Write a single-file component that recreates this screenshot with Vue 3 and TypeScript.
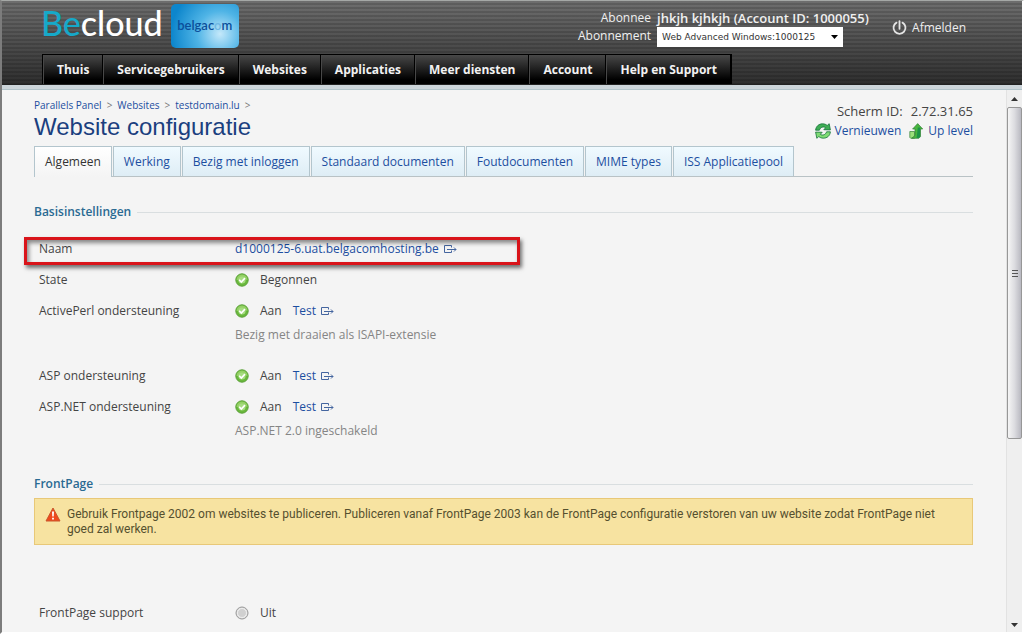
<script setup lang="ts">
import { ref } from 'vue'

interface Setting {
  label: string
  host?: string
  state?: string
  test?: boolean
  note?: string
  marked?: boolean
}

const menu: string[] = ['Thuis', 'Servicegebruikers', 'Websites', 'Applicaties', 'Meer diensten', 'Account', 'Help en Support']
const crumbs: string[] = ['Parallels Panel', 'Websites', 'testdomain.lu']
const tabs: string[] = ['Algemeen', 'Werking', 'Bezig met inloggen', 'Standaard documenten', 'Foutdocumenten', 'MIME types', 'ISS Applicatiepool']
const activeTab = ref('Algemeen')
const subscription = ref('Web Advanced Windows:1000125')

const basics: Setting[] = [
  { label: 'Naam', host: 'd1000125-6.uat.belgacomhosting.be', marked: true },
  { label: 'State', state: 'Begonnen' },
  { label: 'ActivePerl ondersteuning', state: 'Aan', test: true, note: 'Bezig met draaien als ISAPI-extensie' },
  { label: 'ASP ondersteuning', state: 'Aan', test: true },
  { label: 'ASP.NET ondersteuning', state: 'Aan', test: true, note: 'ASP.NET 2.0 ingeschakeld' },
]
</script>

<template>
  <div class="window">
    <header class="top">
      <div class="top-row">
        <div class="brand">
          <span class="becloud"><span class="be">Be</span>cloud</span>
          <span class="belgacom">belgac<span class="ring">o</span>m</span>
        </div>
        <div class="account">
          <span class="account-label">Abonnee</span>
          <strong class="account-name">jhkjh kjhkjh (Account ID: 1000055)</strong>
          <label class="account-label" for="subscription">Abonnement</label>
          <span class="select-box">
            <select id="subscription" v-model="subscription">
              <option>Web Advanced Windows:1000125</option>
            </select>
            <svg class="caret" width="7" height="4" viewBox="0 0 7 4"><path d="M0 0h7L3.500 4z" fill="#000" /></svg>
          </span>
        </div>
        <a class="logout" href="#">
          <svg width="15" height="16" viewBox="0 0 15 16" fill="none" stroke="#e4e4e4" stroke-width="1.800" stroke-linecap="round">
            <path d="M4.500 2.600A6 6 0 1 0 10.500 2.600M7.500 1.200V8.800" />
          </svg>
          Afmelden
        </a>
      </div>
      <nav class="menu">
        <a v-for="item in menu" :key="item" href="#">{{ item }}</a>
      </nav>
    </header>

    <div class="body">
      <main class="content">
        <div class="heading">
          <div>
            <nav class="crumbs">
              <template v-for="crumb in crumbs" :key="crumb"><a href="#">{{ crumb }}</a><span>&gt;</span></template>
            </nav>
            <h1>Website configuratie</h1>
          </div>
          <div class="tools">
            <div class="screen-id"><span>Scherm ID:</span><span>2.72.31.65</span></div>
            <div class="actions">
              <a href="#">
                <svg width="16" height="16" viewBox="0 0 16 16" stroke="#14713a" stroke-width=".8" stroke-linejoin="round">
                  <path fill="#3fae55" d="M.6 7.200C.9 3.400 3.800.8 7.600.8c2 0 3.500.7 4.600 1.700L14.200.7l1.200 6.200-6.600-.2 1.900-2C8.600 3.200 5.400 4 4.400 7.200z" />
                  <path fill="#7fdc74" d="M15.400 8.800c-.3 3.800-3.200 6.400-7 6.400-2 0-3.500-.7-4.600-1.700l-2 1.800L.6 9.100l6.600.2-1.900 2c2.100 1.500 5.300.7 6.300-2.500z" />
                </svg>Vernieuwen</a>
              <a href="#">
                <svg width="15" height="16" viewBox="0 0 15 16" stroke="#35803a" stroke-width=".7" stroke-linejoin="round">
                  <path fill="#9ce07b" d="M.8 8.500H5.500v6.700H1.600L.8 14.400z" />
                  <path fill="#48b63e" d="M8.700.6l5 5.400h-2.200v7.600L9.800 15.300H2.600L6 12.500V6H3.600z" />
                  <path fill="#1c9447" stroke="none" d="M8.800 4.500h2.300v9l-1.400 1.400H7.600z" />
                </svg>Up level</a>
            </div>
          </div>
        </div>

        <div class="tabs" role="tablist">
          <button
            v-for="tab in tabs"
            :key="tab"
            type="button"
            role="tab"
            :aria-selected="tab === activeTab"
            :class="{ active: tab === activeTab }"
            @click="activeTab = tab"
          >{{ tab }}</button>
        </div>

        <section class="basic">
          <h2>Basisinstellingen</h2>
          <dl>
            <div v-for="row in basics" :key="row.label" class="setting" :class="{ marked: row.marked }">
              <dt>{{ row.label }}</dt>
              <dd>
                <div class="value">
                  <a v-if="row.host" class="out-link" href="#">{{ row.host }}
                    <svg width="13" height="9" viewBox="0 0 13 9" fill="none" stroke="#44659f"><path d="M7.500 2.500v-2h-7v7h7v-2M3 4.500h9M10 2.500l2 2-2 2" /></svg>
                  </a>
                  <template v-else>
                    <svg class="dot" width="14" height="14" viewBox="0 0 14 14">
                      <circle cx="7" cy="7" r="6.200" fill="#69b83c" stroke="#5aa038" />
                      <path d="M1.500 7a5.500 5.500 0 0 1 11 0c-4-1-7 0-11 0z" fill="#93d064" />
                      <circle cx="7" cy="7" r="3.600" fill="#a6dc80" />
                      <path d="M4.200 6.800l2.100 2.300 3.700-4" fill="none" stroke="#fff" stroke-width="1.600" />
                    </svg>
                    <span>{{ row.state }}</span>
                    <a v-if="row.test" class="out-link test" href="#">Test
                      <svg width="13" height="9" viewBox="0 0 13 9" fill="none" stroke="#44659f"><path d="M7.500 2.500v-2h-7v7h7v-2M3 4.500h9M10 2.500l2 2-2 2" /></svg>
                    </a>
                  </template>
                </div>
                <p v-if="row.note" class="note">{{ row.note }}</p>
              </dd>
            </div>
          </dl>
        </section>

        <section class="frontpage">
          <h2>FrontPage</h2>
          <div class="warning">
            <svg width="16" height="15" viewBox="0 0 16 15">
              <path d="M8 1l7 13H1z" fill="#ee4a1c" stroke="#c9572c" stroke-linejoin="round" />
              <path d="M7 4.500h2l-.3 5H7.300zM7.100 10.700h1.800v1.800H7.100z" fill="#fff" />
            </svg>
            <p>Gebruik Frontpage 2002 om websites te publiceren. Publiceren vanaf FrontPage 2003 kan de FrontPage configuratie verstoren van uw website zodat FrontPage niet goed zal werken.</p>
          </div>
          <dl>
            <div class="setting">
              <dt>FrontPage support</dt>
              <dd>
                <div class="value">
                  <svg class="dot" width="14" height="14" viewBox="0 0 14 14">
                    <circle cx="7" cy="7" r="6" fill="#dedede" stroke="#979797" />
                    <circle cx="7" cy="7" r="4.500" fill="#d0d0d0" stroke="#efefef" />
                  </svg>
                  <span>Uit</span>
                </div>
              </dd>
            </div>
          </dl>
        </section>
      </main>

      <div class="scrollbar" aria-hidden="true">
        <svg width="7" height="4" viewBox="0 0 7 4"><path d="M0 4h7L3.500 0z" fill="#333" /></svg>
        <div class="track">
          <div class="thumb"><i></i><i></i><i></i></div>
        </div>
        <svg width="7" height="4" viewBox="0 0 7 4"><path d="M0 0h7L3.500 4z" fill="#333" /></svg>
      </div>
    </div>
  </div>
</template>

<style>
body {
  background: #fff;
}
</style>

<style scoped>
*,
*::after {
  box-sizing: border-box;
}

.window {
  display: flex;
  flex-direction: column;
  height: 100vh;
  overflow: hidden;
  border: 1px solid #a5a8a6;
  border-left: 2px solid #7c7c7c;
  border-right: 2px solid #fff;
  border-bottom: 2px solid #fff;
  background: #f4f4f4;
  color: #444;
  font: 12px/18px "Open Sans", "Noto Sans", sans-serif;
}

a {
  color: #1c4ea0;
  text-decoration: none;
}

.top {
  flex: none;
  border-bottom: 1px solid #222;
  background:
    repeating-linear-gradient(rgba(0, 0, 0, 0) 0 2px, rgba(0, 0, 0, 0.14) 2px 4px),
    linear-gradient(#6e6e6e, #2e2e2e);
}

.top-row {
  display: flex;
  align-items: flex-start;
  height: 53px;
  padding-right: 56px;
}

.brand {
  display: flex;
  gap: 8px;
  flex: 1;
  padding: 3px 0 0 39px;
}

.becloud {
  color: #fff;
  font: 500 34px/38px Lato, sans-serif;
}

.be {
  color: #16a9c9;
}

.belgacom {
  width: 68px;
  height: 44px;
  border-radius: 5px;
  background: radial-gradient(circle at 72% 68%, #c4e8fa, #4fb4e6 40%, #0d86cc 85%);
  color: #0b4f9b;
  font: 600 13px/42px Lato, sans-serif;
  text-align: center;
}

.ring {
  color: #6fb8e4;
}

.account {
  display: grid;
  grid-template-columns: auto 217px;
  column-gap: 6px;
  padding-top: 8px;
  color: #f0f0f0;
}

.account-label {
  text-align: right;
}

.account-name {
  font-size: 13px;
  font-weight: 600;
}

.select-box {
  position: relative;
  width: 186px;
  height: 20px;
}

.select-box select {
  width: 100%;
  height: 20px;
  padding: 0 5px;
  border: 0;
  border-radius: 0;
  appearance: none;
  background: #fff;
  color: #333;
  font: 9px/20px "DejaVu Sans", sans-serif;
}

.caret {
  position: absolute;
  top: 8px;
  right: 5px;
}

.logout {
  display: flex;
  align-items: center;
  gap: 5px;
  margin: 18px 0 0 18px;
  color: #eee;
}

.menu {
  display: flex;
  width: fit-content;
  margin-left: 40px;
  border: 1px solid #000;
  border-bottom: 0;
  background: linear-gradient(#484848, #000 85%);
}

.menu a {
  padding: 0 13px;
  border-right: 1px solid #000;
  border-left: 1px solid #484848;
  color: #f2f2f2;
  font-weight: 700;
  line-height: 29px;
}

.body {
  display: flex;
  flex: 1;
  min-height: 0;
  border-top: 4px solid #ccd5da;
  box-shadow: inset 0 1px #b2c4ca;
}

.content {
  flex: 1;
  min-width: 0;
  padding: 8px 33px 0 32px;
}

.heading {
  display: flex;
  justify-content: space-between;
}

.crumbs {
  display: flex;
  gap: 5px;
  font-size: 10px;
  line-height: 16px;
}

.crumbs span {
  color: #777;
}

h1 {
  margin: 0;
  color: #1b3f7f;
  font: 24px/28px "Liberation Sans", sans-serif;
}

.tools {
  padding-top: 4px;
  line-height: 20px;
}

.screen-id,
.actions {
  display: flex;
  justify-content: flex-end;
  gap: 8px;
}

.screen-id {
  font-size: 13px;
}

.actions a {
  display: flex;
  align-items: center;
  gap: 4px;
}

.tabs {
  display: flex;
  gap: 1px;
  margin-top: 5px;
  border-bottom: 1px solid #b9c2c5;
}

.tabs button {
  height: 30px;
  padding: 0 10px;
  border: 1px solid #b3c5cd;
  border-bottom: 0;
  background: linear-gradient(#f0faff, #deedf5);
  color: #1c4ea0;
  font: inherit;
  white-space: nowrap;
}

.tabs button.active {
  height: 31px;
  margin-bottom: -1px;
  background: linear-gradient(#fff, #f4f4f4);
  color: #333;
}

.basic {
  margin-top: 26px;
}

h2 {
  display: flex;
  align-items: center;
  gap: 6px;
  margin: 0;
  color: #2a6a92;
  font-size: 12px;
  font-weight: 600;
  line-height: 18px;
}

h2::after {
  flex: 1;
  height: 1px;
  background: #d9dee0;
  content: "";
}

dl {
  margin: 0;
}

.basic dl {
  padding-top: 13px;
}

.setting {
  display: grid;
  grid-template-columns: 196px 1fr;
  position: relative;
  padding: 6px 5px 7px;
}

.marked::after {
  position: absolute;
  top: 3px;
  left: -10px;
  width: 496px;
  height: 28px;
  border: 3px solid #d9141a;
  box-shadow: 2px 3px 4px rgba(0, 0, 0, 0.55), inset 2px 3px 4px rgba(0, 0, 0, 0.45);
  content: "";
  pointer-events: none;
}

dd {
  margin: 0;
}

.value {
  display: flex;
  align-items: center;
}

.out-link {
  display: flex;
  align-items: center;
  gap: 5px;
}

.dot {
  margin: 0 11px 0 0;
}

.test {
  margin-left: 11px;
}

.note {
  margin: 6px 0 10px;
  color: #858585;
}

.frontpage {
  margin-top: 18px;
}

.warning {
  display: flex;
  align-items: flex-start;
  gap: 6px;
  margin-top: 5px;
  padding: 8px 16px 7px 10px;
  border: 1px solid #e8c878;
  background: #f7e3a1;
  color: #55502f;
  font-family: Roboto, "Open Sans", sans-serif;
  line-height: 15px;
}

.warning svg {
  flex: none;
}

.warning p {
  margin: 0;
}

.frontpage dl {
  padding-top: 53px;
}

.scrollbar {
  display: flex;
  flex: none;
  flex-direction: column;
  align-items: center;
  gap: 6px;
  width: 16px;
  margin-top: 1px;
  padding: 7px 0 5px;
  border-left: 1px solid #e2e2e2;
  background: #efefef;
}

.track {
  flex: 1;
  width: 100%;
}

.thumb {
  display: flex;
  flex-direction: column;
  align-items: center;
  justify-content: center;
  gap: 1px;
  height: 65%;
  border: 1px solid #979797;
  border-radius: 2px;
  background: linear-gradient(90deg, #f5f5f5, #dcdce0 50%, #b9b9c1);
}

.thumb i {
  width: 6px;
  height: 2px;
  border-bottom: 1px solid #555;
}
</style>
